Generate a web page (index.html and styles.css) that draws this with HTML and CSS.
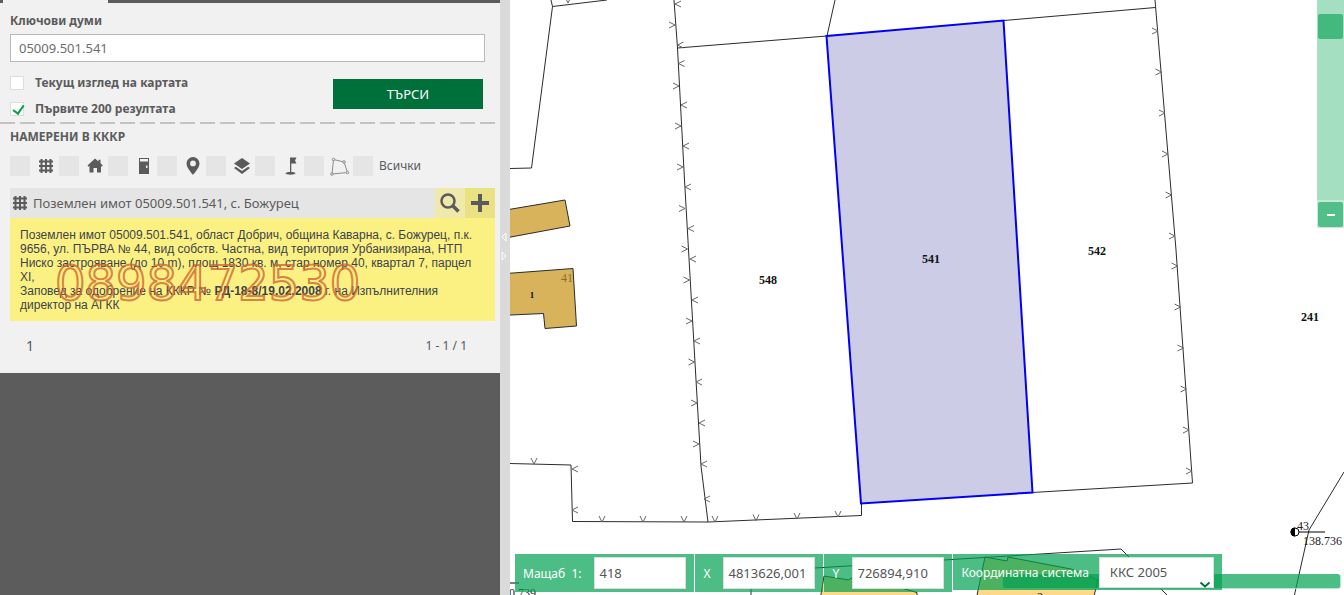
FILE: index.html
```html
<!DOCTYPE html>
<html lang="bg">
<head>
<meta charset="utf-8">
<title>КАИС – карта</title>
<link rel="stylesheet" href="styles.css">
</head>
<body>
<div class="app">
  <aside class="side">
    <div class="panel">
      <div class="tabs"><span class="tab-active"></span></div>
      <form class="search">
        <label class="search-label" for="keywords">Ключови думи</label>
        <input class="search-input" id="keywords" type="text" value="05009.501.541">
        <div class="search-row">
          <div class="options">
            <label class="option"><input class="tick" type="checkbox">Текущ изглед на картата</label>
            <label class="option"><input class="tick" type="checkbox" checked>Първите 200 резултата</label>
          </div>
          <button class="search-btn" type="button">ТЪРСИ</button>
        </div>
      </form>
      <div class="dashes"></div>
      <section class="results">
        <h2 class="results-title">НАМЕРЕНИ В КККР</h2>
        <div class="filters">
          <label class="filter"><input class="box" type="checkbox" aria-label="Имоти"><svg class="icon" viewBox="0 0 20 20"><path class="grid" d="M5.500 3v14M10 3v14M14.500 3v14M3 5.500h14M3 10h14M3 14.500h14"/></svg></label>
          <label class="filter"><input class="box" type="checkbox" aria-label="Сгради"><svg class="icon" viewBox="0 0 20 20"><path d="M10 2.500 2.500 9.500l1 1.200L4.500 10v6.500H8.500v-4.500h3.500v4.500h4V10l.8.700 1-1.200-2.300-2.200V3.800h-2v1.600z"/></svg></label>
          <label class="filter"><input class="box" type="checkbox" aria-label="Обекти"><svg class="icon" viewBox="0 0 20 20"><path d="M5 2h10v16H5zM6 3v2.500h8V3zM12 9.500v2.500h1.500V9.500z" fill-rule="evenodd"/></svg></label>
          <label class="filter"><input class="box" type="checkbox" aria-label="Адреси"><svg class="icon" viewBox="0 0 20 20"><path d="M10 1a6.500 6.500 0 0 0-6.500 6.500C3.500 12 10 18.800 10 18.800s6.500-6.800 6.500-11.300A6.500 6.500 0 0 0 10 1zm0 3.500a2.900 2.900 0 1 1 0 5.800 2.900 2.900 0 0 1 0-5.800z" fill-rule="evenodd"/></svg></label>
          <label class="filter"><input class="box" type="checkbox" aria-label="Слоеве"><svg class="icon" viewBox="0 0 20 20"><path d="M10 2l8 5.500-8 5.500-8-5.500zM2 12l1.800-1.300L10 15l6.200-4.300L18 12l-8 6z"/></svg></label>
          <label class="filter"><input class="box" type="checkbox" aria-label="Точки"><svg class="icon" viewBox="0 0 20 20"><path d="M9 1.500h6.500L14 4.500l1.500 3h-5.200V16c2.500 0 4.200.6 4.200 1.300 0 .8-2.200 1.400-5 1.400s-5-.6-5-1.400C4.500 16.600 6.500 16 9 16z"/></svg></label>
          <label class="filter"><input class="box" type="checkbox" aria-label="Полигони"><svg class="icon thin" viewBox="0 0 20 20"><path d="M2 18 3.500 3.500 14 6l3.500 10.500z"/><circle cx="2" cy="18" r="1.300"/><circle cx="3.500" cy="3.500" r="1.300"/><circle cx="14" cy="6" r="1.300"/><circle cx="17.500" cy="16.500" r="1.300"/></svg></label>
          <label class="filter"><input class="box" type="checkbox">Всички</label>
        </div>
        <article class="result">
          <header class="result-head">
            <svg class="icon" viewBox="0 0 20 20"><path class="grid" d="M5.500 3v14M10 3v14M14.500 3v14M3 5.500h14M3 10h14M3 14.500h14"/></svg>
            <span class="result-name">Поземлен имот 05009.501.541, с. Божурец</span>
            <button class="act act-zoom" type="button" aria-label="Покажи"><svg class="act-icon" viewBox="0 0 20 20"><circle cx="8" cy="8" r="6.500" stroke-width="2.500"/><path d="M12.500 12.500l6 6" stroke-width="3.500"/></svg></button>
            <button class="act act-add" type="button" aria-label="Добави"><svg class="act-icon" viewBox="0 0 20 20"><path d="M10 1v18M1 10h18" stroke-width="4"/></svg></button>
          </header>
          <div class="result-body">
            Поземлен имот 05009.501.541, област Добрич, община Каварна, с. Божурец, п.к. 9656, ул. ПЪРВА № 44, вид собств. Частна, вид територия Урбанизирана, НТП Ниско застрояване (до 10 m), площ 1830 кв. м, стар номер 40, квартал 7, парцел XI,<br>
            Заповед за одобрение на КККР № <b>РД-18-8/19.02.2008</b> г. на Изпълнителния директор на АГКК
            <span class="stamp">0898472530</span>
          </div>
        </article>
        <nav class="pager"><a class="page" href="#">1</a><span>1 - 1 / 1</span></nav>
      </section>
    </div>
  </aside>
  <div class="splitter">
    <svg class="arrows" viewBox="0 0 10 32"><path d="M6 3v8L2 7zM2 22v8l4-4z"/></svg>
  </div>
  <main class="map">
    <svg class="plan" viewBox="510 0 834 595" preserveAspectRatio="xMinYMin slice">
      <g class="house">
        <path d="M500 211 565 200 570 226 500 239z"/>
        <path d="M500 274 573 268.500 576.500 326 545 328.500 543.500 313.500 500 315.500z"/>
      </g>
      <g class="house-low">
        <path d="M824 576 849 580 851 578 880 582 917 592.500V600H820z"/>
        <path d="M985 557 1007 561 1008 557 1071 569 1098 580 1093 600H976z"/>
      </g>
      <g class="line">
        <path d="M551 0 552.500 6.500 531.500 168 510 168.500M552.500 6.500 607 0"/>
        <path d="M674 0 677.500 48 684.500 180 696 380 701 466 708 522M677.500 48 827 36 835 0"/>
        <path d="M1004 20.500 1155.500 7.500M1155 0 1176 250 1192.500 483 1032 492.500"/>
        <path d="M510 463.500 571 465 572.500 521.500 708 522 861.500 515.500V503"/>
        <path d="M1344 472 1309 530 1294 597M815 568 1121 549 1172 600M751 588V595"/>
      </g>
      <path class="tick-marks" d="M681 1l-6 3 6 3M683.500 42l-6 3 6 3M684.500 60.500l-6 3 6 3M687 102l-6 3 6 3M689 143l-6 3 6 3M691 184l-6 3 6 3M694 225.500l-6 3 6 3M696 256l-6 3 6 3M698 297l-6 3 6 3M700 338l-6 3 6 3M702 379l-6 3 6 3M705 420l-6 3 6 3M707 461l-6 3 6 3M710 496l-6 3 6 3M578 466l-6 3 6 3M578 507l-6 3 6 3
        M669 22l6 3-6 3M673 83l6 3-6 3M675 123l6 3-6 3M677 164l6 3-6 3M679 205.500l6 3-6 3M681.500 246l6 3-6 3M683.500 277l6 3-6 3M686 318l6 3-6 3M688.500 359l6 3-6 3M691 400l6 3-6 3M693 441l6 3-6 3
        M1152 28l6 3-6 3M1155.500 69l6 3-6 3M1159 110l6 3-6 3M1162 151l6 3-6 3M1165.500 192l6 3-6 3M1169 233l6 3-6 3M1171.500 263l6 3-6 3M1174.500 304l6 3-6 3M1177.500 345l6 3-6 3M1180.500 386l6 3-6 3M1183 427l6 3-6 3M1186 468l6 3-6 3
        M531 458l3 6 3-6M599 516l3 6 3-6M640 516l3 6 3-6M681 516l3 6 3-6M712 516l3 6 3-6M753 514.500l3 6 3-6M794 513l3 6 3-6M835 511l3 6 3-6M565-3l3 6 3-6"/>
      <path class="selected" d="M826.500 36 1003.500 20.500 1032.500 492.500 861 503.500z"/>
      <path class="bench" d="M1295 532h30M510 583h9"/>
      <circle class="dot" cx="1295" cy="532" r="4"/>
      <path d="M1295 527.500a4.500 4.500 0 0 0 0 9z"/>
      <g class="numbers">
        <text x="768" y="284">548</text>
        <text x="931" y="263">541</text>
        <text x="1097" y="255">542</text>
        <text x="1310" y="321">241</text>
        <text class="tiny" x="532" y="298">1</text>
      </g>
      <g class="heights">
        <text class="faded" x="561" y="282">41</text>
        <text x="1297" y="530">43</text>
        <text x="1303" y="545">138.736</text>
        <text x="509" y="597">0.739</text>
        <text x="1037" y="601">2</text>
      </g>
    </svg>

    <div class="zoom">
      <input class="zoom-range" type="range" min="0" max="175" value="161" aria-label="Увеличение">
      <button class="zoom-out" type="button" aria-label="Намали"></button>
    </div>

    <div class="status-strip"></div>
    <form class="coords">
      <div class="field"><label for="scale">Мащаб&nbsp; 1:</label><input class="value" id="scale" type="text" value="418"></div>
      <div class="field"><label class="axis" for="cx">X</label><input class="value" id="cx" type="text" value="4813626,001"></div>
      <div class="field"><label class="axis" for="cy">Y</label><input class="value" id="cy" type="text" value="726894,910"></div>
      <div class="field field-crs"><label for="crs">Координатна система</label>
        <span class="select-wrap"><select class="crs" id="crs"><option>ККС 2005</option></select><svg class="chevron" viewBox="0 0 12 8"><path d="M1.500 1.500 6 5.500l4.500-4"/></svg></span>
      </div>
    </form>
  </main>
</div>
</body>
</html>
```

FILE: styles.css
```css
* { box-sizing: border-box; }

body {
  margin: 0;
  font-family: "Noto Sans", "Open Sans", sans-serif;
  font-size: 12px;
  color: #5b5b5b;
}

input, button, select { font: inherit; color: inherit; margin: 0; }

.app {
  display: grid;
  grid-template-columns: 500px 10px 1fr;
  height: 100vh;
  overflow: hidden;
}

/* Side panel */
.side { background: #5c5c5c; }
.panel { background: #f1f1f1; }
.tabs { height: 3px; background: #5c5c5c; padding-left: 3px; }
.tab-active { display: block; width: 105px; height: 3px; background: #f1f1f1; }

.search { padding: 10px 15px 5px 10px; display: flex; flex-direction: column; }
.search-label { font-size: 12px; font-weight: 700; line-height: 16px; margin-bottom: 5px; }
.search-input {
  height: 28px;
  padding: 0 8px;
  border: 1px solid #b9b9b9;
  background: #fff;
  color: #6e6e6e;
  font-size: 13px;
}
.search-row { display: flex; justify-content: space-between; margin-top: 13px; padding-right: 2px; }
.options { display: grid; gap: 10px; }
.option { display: flex; align-items: center; gap: 11px; font-size: 12px; font-weight: 700; line-height: 16px; }
.tick { appearance: none; width: 14px; height: 14px; background: #fff; border: 1px solid #ddd; }
.tick:checked::after {
  content: "";
  display: block;
  width: 5px;
  height: 9px;
  margin: 0 0 0 4px;
  border: solid #0aa050;
  border-width: 0 2px 2px 0;
  transform: rotate(35deg);
}
.search-btn {
  width: 150px;
  height: 30px;
  margin-top: 4px;
  border: 0;
  background: #00703a;
  color: #fff;
  font-size: 13px;
}
.dashes {
  height: 2px;
  margin-right: 5px;
  background: repeating-linear-gradient(90deg, #c3c3c3 0 15px, transparent 15px 20px);
}

.results { padding: 5px 5px 17px 10px; }
.results-title { margin: 0 0 11px; font-size: 12px; font-weight: 700; line-height: 16px; }
.filters { display: flex; gap: 3px; margin-bottom: 12px; }
.filter { display: flex; align-items: center; gap: 6px; font-size: 12px; line-height: 20px; }
.box { appearance: none; width: 20px; height: 20px; background: #e5e5e5; }
.icon { width: 20px; height: 20px; fill: #5b5b5b; }
.grid { stroke: #5b5b5b; stroke-width: 2; fill: none; }
.thin { fill: #f1f1f1; stroke: #8c8c8c; stroke-width: 1; }

.result-head { display: flex; align-items: center; height: 30px; background: #e5e5e5; }
.result-name { flex: 1; padding-left: 3px; font-size: 13px; }
.act { width: 30px; height: 30px; padding: 0; border: 0; display: grid; place-items: center; }
.act-zoom { background: #efeaac; }
.act-add { background: #e9e182; }
.act-icon { width: 20px; height: 20px; fill: none; stroke: #5b5b5b; stroke-width: 3; }
.result-body {
  position: relative;
  padding: 10px 10px 9px;
  background: #fbf182;
  color: #3d434b;
  font: 12px/14px "Liberation Sans", sans-serif;
}
.stamp {
  position: absolute;
  left: 45px;
  top: 40px;
  font: 48px/50px "DejaVu Sans", sans-serif;
  color: transparent;
  -webkit-text-stroke: 2px rgba(208, 100, 50, 0.8);
}
.pager { display: flex; justify-content: space-between; margin-top: 15px; padding: 0 28px 0 16px; font-size: 12px; line-height: 20px; color: #556; }
.page { color: inherit; text-decoration: none; font-size: 14px; }

.splitter { background: #dadada; padding-top: 230px; }
.arrows { display: block; width: 10px; height: 32px; fill: none; stroke: #fff; stroke-width: 1; }

/* Map */
.map { position: relative; overflow: hidden; background: #fff; }
.plan { display: block; width: 100%; height: 100%; }
.line { fill: none; stroke: #2b2b2b; stroke-width: 1; }
.tick-marks { fill: none; stroke: #666; stroke-width: 1; }
.house { fill: #d8b35c; stroke: #2b2b2b; stroke-width: 1; }
.house-low { fill: #ffd98a; stroke: #2b2b2b; stroke-width: 1; }
.selected { fill: #cccce6; stroke: #0000f5; stroke-width: 2; }
.bench { stroke: #000; stroke-width: 1; }
.dot { fill: #fff; stroke: #000; }
.numbers { font: 700 12px "Liberation Serif", serif; text-anchor: middle; fill: #111; }
.numbers .tiny { font-size: 9px; }
.heights { font: 12px "Liberation Serif", serif; fill: #222; }
.heights .faded { fill: #8d6d25; }

.zoom { position: absolute; top: 0; right: 0; width: 27px; padding-bottom: 1px; display: grid; gap: 2px; background: #c4ead8; }
.zoom-range {
  appearance: none;
  writing-mode: vertical-lr;
  direction: rtl;
  width: 27px;
  height: 200px;
  background: #a4dfc2;
}
.zoom-range::-webkit-slider-thumb {
  appearance: none;
  width: 25px;
  height: 25px;
  border-radius: 2px;
  background: #43b97e;
}
.zoom-out { display: grid; place-items: center; width: 25px; height: 25px; margin-left: 1px; padding: 0; border: 0; border-radius: 2px; background: #52bf8a; }
.zoom-out::before { content: ""; width: 8px; height: 2px; background: #fff; }

.status-strip {
  position: absolute;
  left: 492px;
  right: 3px;
  bottom: 6px;
  height: 15px;
  border: solid rgba(255, 255, 255, 0.6);
  border-width: 0 1px 1px;
  border-radius: 3px;
  background: rgba(0, 161, 80, 0.7);
}
.coords { position: absolute; left: 5px; bottom: 3px; display: flex; align-items: flex-start; gap: 1px; color: #fff; }
.field { display: flex; align-items: center; gap: 13px; height: 38px; padding: 0 8px; background: rgba(0, 161, 80, 0.7); }
.axis { width: 7px; }
.field-crs { height: 36px; gap: 10px; }
.value, .crs { width: 92px; height: 32px; padding: 0 4px; border: 1px solid #ddd; border-radius: 0; background: #fff; color: #555; font-size: 13px; }
.select-wrap { position: relative; }
.crs { appearance: none; display: block; width: 115px; height: 31px; padding: 0 10px; }
.chevron { position: absolute; right: 3px; bottom: -1px; width: 12px; height: 8px; fill: none; stroke: #00703a; stroke-width: 2; pointer-events: none; }
```
